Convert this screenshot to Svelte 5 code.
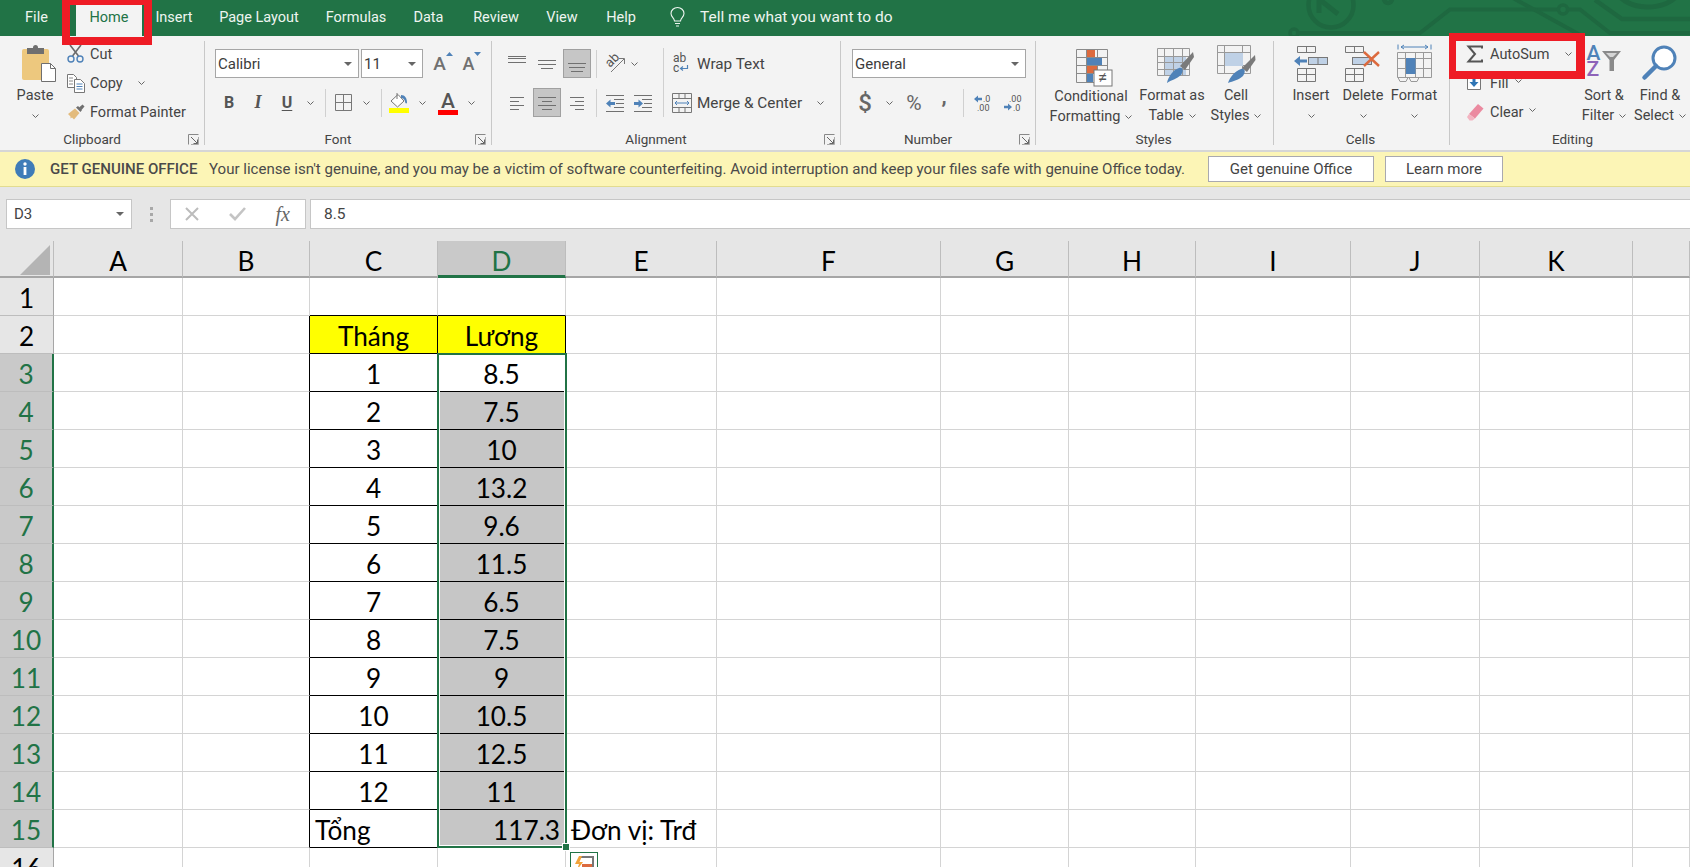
<script>
  const tabs = ['File', 'Home', 'Insert', 'Page Layout', 'Formulas', 'Data', 'Review', 'View', 'Help'];
  const cols = ['A', 'B', 'C', 'D', 'E', 'F', 'G', 'H', 'I', 'J', 'K', ''];
  const rows = Array.from({ length: 16 }, (_, i) => i + 1);
  const content = {
    2: ['Tháng', 'Lương'], 3: ['1', '8.5'], 4: ['2', '7.5'], 5: ['3', '10'], 6: ['4', '13.2'], 7: ['5', '9.6'],
    8: ['6', '11.5'], 9: ['7', '6.5'], 10: ['8', '7.5'], 11: ['9', '9'], 12: ['10', '10.5'], 13: ['11', '12.5'], 14: ['12', '11']
  };
  function cellClass(r, c) {
    const inTable = r >= 2 && r <= 15;
    const out = ['cell'];
    if (inTable && c >= 1 && c <= 3) out.push('black-right');
    if (r >= 1 && r <= 15 && (c === 2 || c === 3)) out.push('black-bottom');
    if (r === 2 && (c === 2 || c === 3)) out.push('yellow');
    if (r >= 4 && r <= 15 && c === 3) out.push('picked');
    if (r === 15 && c === 2) out.push('left');
    if (r === 15 && c === 3) out.push('right');
    if (r === 15 && c === 4) out.push('left', 'spill');
    return out.join(' ');
  }
  function cellText(r, c) {
    if (r === 15) return c === 2 ? 'Tổng' : c === 3 ? '117.3' : c === 4 ? 'Đơn vị: Trđ' : '';
    if (content[r] && (c === 2 || c === 3)) return content[r][c - 2];
    return '';
  }
</script>

{#snippet chev()}
  <svg class="chev" width="7" height="4" viewBox="0 0 7 4"><polyline points="0.5,0.5 3.5,3.5 6.5,0.5" fill="none" stroke="#666" /></svg>
{/snippet}
{#snippet launcher()}
  <span class="launch"><svg width="11" height="11" viewBox="0 0 11 11"><path d="M0.5 10.5V0.5H10.5" fill="none" stroke="#888" /><path d="M3 3L9.5 9.5M9.5 5.5V9.5H5.5" fill="none" stroke="#666" /><path d="M10.5 3V10.5H3" fill="none" stroke="#aaa" /></svg></span>
{/snippet}
{#snippet drop()}
  <svg class="drop" width="8" height="4" viewBox="0 0 8 4"><path d="M0 0H8L4 4Z" fill="#666" /></svg>
{/snippet}
{#snippet lines(list, w)}
  <svg width={w} height="18" viewBox={`0 0 ${w} 18`}>
    {#each list as l}<line x1={l[0]} x2={l[1]} y1={l[2]} y2={l[2]} stroke="#707070" />{/each}
  </svg>
{/snippet}

<div class="page">
  <header class="titlebar">
    <svg class="circuit" width="440" height="36" viewBox="1250 0 440 36">
      <g fill="none" stroke="#1e6840" stroke-width="4.5">
        <circle cx="1331" cy="5" r="22.5" />
        <path d="M1319 -6L1319 13M1319 -1L1338 14" stroke-width="5" />
        <circle cx="1388" cy="-1" r="4" />
        <circle cx="1294" cy="33" r="4" stroke-width="3.5" />
        <path d="M1298 33H1420L1450 9.5H1558" stroke-width="4" />
        <circle cx="1563" cy="9.5" r="4.5" stroke-width="3.5" />
        <path d="M1568 9.5H1580L1610 33H1690" stroke-width="4" />
        <path d="M1513 -2L1582 36" stroke-width="4" />
        <path d="M1595 0L1622 19H1690" stroke-width="4.5" />
        <path d="M1617 -8A32 20 0 0 0 1678 -6" stroke-width="5" />
      </g>
    </svg>
    <nav class="tabs">
      {#each tabs as t}<span class="tab" class:active={t === 'Home'}>{t}</span>{/each}
      <span class="bulb">
        <svg width="15" height="20" viewBox="0 0 15 20"><path d="M4.5 14C4.5 11 1 10 1 6.5A6.5 6 0 0 1 14 6.5C14 10 10.5 11 10.5 14ZM5 16.5H10M6 19H9" fill="none" stroke="#eef5f0" stroke-width="1.1" /></svg>
      </span>
      <span class="tell">Tell me what you want to do</span>
    </nav>
  </header>

  <section class="ribbon">
    <div class="group clipboard">
      <div class="body row">
        <div class="big paste">
          <svg class="ic-paste" width="34" height="37" viewBox="0 0 34 37">
            <rect x="0" y="4" width="27" height="31" rx="2" fill="#edc87e" />
            <rect x="5" y="3" width="17" height="6" fill="#6f6f6f" />
            <circle cx="13.5" cy="2.5" r="2.5" fill="#6f6f6f" />
            <path d="M19.5 18.5H28.5L33.5 23.5V36.5H19.5Z" fill="#fff" stroke="#6f6f6f" />
            <path d="M28.5 18.5V23.5H33.5" fill="none" stroke="#6f6f6f" />
          </svg>
          <span class="t1">Paste</span>
          <span class="t2">{@render chev()}</span>
        </div>
        <div class="smalls">
          <div class="small">
            <span class="sic"><svg width="17" height="18" viewBox="0 0 17 18"><path d="M3 0L11.5 11M14 0L5.5 11" stroke="#6a6a6a" stroke-width="1.6" fill="none" /><circle cx="4" cy="14" r="3" fill="none" stroke="#4f82b8" stroke-width="1.4" /><circle cx="13" cy="14" r="3" fill="none" stroke="#4f82b8" stroke-width="1.4" /></svg></span>
            <span>Cut</span>
          </div>
          <div class="small">
            <span class="sic"><svg width="18" height="19" viewBox="0 0 18 19"><path d="M0.5 0.5H6.5L9.5 3.5V13.5H0.5Z" fill="#fff" stroke="#777" /><path d="M7.5 5.5H13.5L17.5 9.5V18.5H7.5Z" fill="#fff" stroke="#777" /><path d="M2 4H6M2 7H6M2 10H6" stroke="#8a8a8a" /><path d="M9.5 10H15.5M9.5 12.5H15.5M9.5 15H15.5" stroke="#4f82b8" /></svg></span>
            <span>Copy</span>
            <span class="copy-chev">{@render chev()}</span>
          </div>
          <div class="small">
            <span class="sic"><svg width="18" height="16" viewBox="0 0 18 16"><path d="M1 10L8 4.5L12.5 9L7 15.5L5 13.5L3.5 14.5L3.5 12.5Z" fill="#e3bb7c" /><path d="M9 3.5L13.5 8L15 6L11 2Z" fill="#6f6f6f" /><path d="M12 3.5L15.5 0.5L17.5 2.5L14.5 6Z" fill="#6f6f6f" /></svg></span>
            <span>Format Painter</span>
          </div>
        </div>
      </div>
      <div class="label"><span>Clipboard</span>{@render launcher()}</div>
    </div>

    <div class="group font">
      <div class="body">
        <div class="line">
          <div class="combo w144"><span>Calibri</span>{@render drop()}</div>
          <div class="combo w62"><span>11</span>{@render drop()}</div>
          <span class="tool w28 ml6 growA"><b class="a">A</b><svg width="7" height="4" viewBox="0 0 7 4"><path d="M0 4L3.5 0L7 4Z" fill="#4f82b8" /></svg></span>
          <span class="tool w28 ml1 growA"><b class="a small-a">A</b><svg width="7" height="4" viewBox="0 0 7 4"><path d="M0 0H7L3.5 4Z" fill="#4f82b8" /></svg></span>
        </div>
        <div class="line second">
          <span class="tool w28 glyph"><b>B</b></span>
          <span class="tool w30 glyph"><b class="it">I</b></span>
          <span class="tool w28 glyph"><b class="un">U</b></span>
          <span class="tool w18">{@render chev()}</span>
          <i class="sep ml6"></i>
          <span class="tool w22 ml6"><svg width="17" height="17" viewBox="0 0 17 17"><path d="M0.5 0.5H16.5V16.5H0.5ZM8.5 0.5V16.5M0.5 8.5H16.5" fill="none" stroke="#777" /></svg></span>
          <span class="tool w24">{@render chev()}</span>
          <i class="sep ml3"></i>
          <span class="tool w24 ml5"><svg width="20" height="20" viewBox="0 0 20 20"><path d="M9 1.5L2 8L8.5 14L15 8Z" fill="#fff" stroke="#777" /><path d="M8 0V6" stroke="#777" /><path d="M12 2C16 2 18 5 18 10C17 11 16 10 16 8C15 6 14 5 12 5Z" fill="#4f82b8" /><rect x="0" y="15" width="20" height="5" fill="#ffff00" /></svg></span>
          <span class="tool w22">{@render chev()}</span>
          <span class="tool w24 ml3 colorA"><b>A</b><i></i></span>
          <span class="tool w22">{@render chev()}</span>
        </div>
      </div>
      <div class="label"><span>Font</span>{@render launcher()}</div>
    </div>

    <div class="group align">
      <div class="body row">
        <div class="align-left">
          <div class="line">
            <span class="tool w28">{@render lines([[0,18,1.5],[0,18,3.5],[0,18,7.5]], 18)}</span>
            <span class="tool w28 ml2">{@render lines([[0,18,5.5],[0,18,9.5],[3,15,13.5]], 18)}</span>
            <span class="tool w28 ml2 on">{@render lines([[0,18,8.5],[1,17,12.5],[3,15,16.5]], 18)}</span>
            <i class="sep ml5"></i>
            <span class="tool w26 ml5"><svg width="19" height="18" viewBox="0 0 19 18"><text x="0" y="0" transform="translate(4 13) rotate(-45)" class="svgtxt" font-size="13">ab</text><path d="M5 17L18 4M13 3.5H18.5V9" fill="none" stroke="#777" /></svg></span>
            <span class="tool w12">{@render chev()}</span>
          </div>
          <div class="line second">
            <span class="tool w28">{@render lines([[0,14,3.5],[0,9,7.5],[0,14,11.5],[0,9,15.5]], 14)}</span>
            <span class="tool w28 ml2 on">{@render lines([[0,18,3.5],[4,14,7.5],[0,18,11.5],[4,14,15.5]], 18)}</span>
            <span class="tool w28 ml2">{@render lines([[0,14,3.5],[5,14,7.5],[0,14,11.5],[5,14,15.5]], 14)}</span>
            <i class="sep ml5"></i>
            <span class="tool w26 ml5"><svg width="18" height="18" viewBox="0 0 18 18"><path d="M0 1.5H18M8 5.5H18M10 9.5H18M8 13.5H18M0 17.5H18" stroke="#707070" /><path d="M0 9.5L4.5 5.5V8H9V11H4.5V13.5Z" fill="#4f82b8" /></svg></span>
            <span class="tool w30"><svg width="18" height="18" viewBox="0 0 18 18"><path d="M0 1.5H18M8 5.5H18M10 9.5H18M8 13.5H18M0 17.5H18" stroke="#707070" /><path d="M9 9.5L4.5 5.5V8H0V11H4.5V13.5Z" fill="#4f82b8" /></svg></span>
          </div>
        </div>
        <i class="sep tall"></i>
        <div class="align-right">
          <div class="line textline">
            <span class="sic2"><svg width="17" height="19" viewBox="0 0 17 19"><text x="1" y="8" class="svgtxt" font-size="12">ab</text><text x="1" y="18" class="svgtxt" font-size="12">c</text><path d="M15.5 11V14.5H9M11 12.5L8.5 14.5L11 16.5" fill="none" stroke="#4f82b8" stroke-width="1.2" /></svg></span>
            <span>Wrap Text</span>
          </div>
          <div class="line second textline">
            <span class="sic2"><svg width="20" height="20" viewBox="0 0 20 20"><path d="M0.5 0.5H19.5V19.5H0.5ZM0.5 5.5H19.5M0.5 14.5H19.5M7 0.5V5.5M13 0.5V5.5M7 14.5V19.5M13 14.5V19.5" fill="none" stroke="#777" /><path d="M3 10H17M5 8L3 10L5 12M15 8L17 10L15 12" fill="none" stroke="#4f82b8" /></svg></span>
            <span>Merge &amp; Center</span>
            <span class="merge-chev">{@render chev()}</span>
          </div>
        </div>
      </div>
      <div class="label"><span>Alignment</span>{@render launcher()}</div>
    </div>

    <div class="group number">
      <div class="body">
        <div class="line"><div class="combo w174"><span>General</span>{@render drop()}</div></div>
        <div class="line second">
          <span class="tool w26 glyph big-g dollar"><b>$</b></span>
          <span class="tool w22">{@render chev()}</span>
          <span class="tool w28 glyph pct">%</span>
          <span class="tool w28 ml2 glyph big-g comma"><b>,</b></span>
          <i class="sep ml5"></i>
          <span class="tool w32 ml2"><svg width="17" height="18" viewBox="0 0 17 18"><path d="M0 5L4 1.5V3.8H8V6.2H4V8.5Z" fill="#4f82b8" /><text x="9" y="8" class="svgtxt" font-size="9">.0</text><text x="3" y="17" class="svgtxt" font-size="9">.00</text></svg></span>
          <span class="tool w28"><svg width="17" height="18" viewBox="0 0 17 18"><text x="5" y="8" class="svgtxt" font-size="9">.00</text><path d="M8 14L4 10.5V12.8H0V15.2H4V17.5Z" transform="translate(0 -1)" fill="#4f82b8" /><text x="9" y="17" class="svgtxt" font-size="9">.0</text></svg></span>
        </div>
      </div>
      <div class="label"><span>Number</span>{@render launcher()}</div>
    </div>

    <div class="group styles">
      <div class="body row">
        <div class="big w90">
          <svg class="ic cf" width="37" height="38" viewBox="0 0 37 38">
            <path d="M0.5 0.5H31.5V33.5H0.5ZM0.5 8.5H31.5M0.5 16.5H31.5M0.5 24.5H31.5M10.5 0.5V33.5M21.5 0.5V33.5" fill="none" stroke="#8a8a8a" />
            <rect x="11" y="1" width="8" height="7" fill="#dc6a3e" /><rect x="11" y="9" width="15" height="7" fill="#4f82b8" /><rect x="11" y="17" width="10" height="7" fill="#dc6a3e" /><rect x="11" y="25" width="6" height="8" fill="#4f82b8" />
            <rect x="18" y="21" width="18" height="16" fill="#fff" stroke="#777" />
            <text x="22" y="34" class="svgtxt" font-size="17">≠</text>
          </svg>
          <span class="t1">Conditional</span>
          <span class="t2">Formatting {@render chev()}</span>
        </div>
        <div class="big w72">
          <svg class="ic tb" width="37" height="36" viewBox="0 0 37 36">
            <rect x="7" y="8" width="22" height="20" fill="#bfd1e6" />
            <path d="M0.5 0.5H32.5V27.5H0.5ZM0.5 8.5H32.5M0.5 14.5H32.5M0.5 21.5H32.5M7.5 0.5V27.5M16.5 0.5V27.5M25.5 0.5V27.5" fill="none" stroke="#999" />
            <path d="M36 4L37 9L28 22L23 18Z" fill="#7a7a7a" />
            <path d="M22 20C26 19 27 23 24 27C20 31 14 32 10 35C11 29 16 22 22 20Z" fill="#4f82b8" />
          </svg>
          <span class="t1">Format as</span>
          <span class="t2">Table {@render chev()}</span>
        </div>
        <div class="big w56">
          <svg class="ic shift" width="39" height="38" viewBox="0 0 39 38">
            <path d="M0.5 0.5H33.5V28.5H0.5ZM0.5 7.5H33.5M0.5 20.5H33.5M7.5 0.5V28.5M25.5 0.5V28.5" fill="none" stroke="#999" />
            <rect x="8" y="8" width="18" height="13" fill="#bfd1e6" />
            <path d="M38 10L38.5 15L30 27L25 23Z" fill="#7a7a7a" />
            <path d="M24 24C28 23 29 27 26 31C22 35 16 36 11 38C13 32 18 26 24 24Z" fill="#4f82b8" />
          </svg>
          <span class="t1">Cell</span>
          <span class="t2">Styles {@render chev()}</span>
        </div>
      </div>
      <div class="label centered"><span>Styles</span></div>
    </div>

    <div class="group cells">
      <div class="body row">
        <div class="big w50">
          <svg class="ic five" width="34" height="36" viewBox="0 0 34 36">
            <path d="M3.5 0.5H21.5V6.5H3.5ZM12.5 0.5V6.5M3.5 22.5H21.5V35.5H3.5ZM12.5 22.5V35.5M3.5 28.5H21.5" fill="none" stroke="#777" />
            <rect x="14.5" y="11.5" width="19" height="7" fill="#bfd1e6" stroke="#777" /><path d="M24 11.5V18.5" stroke="#777" />
            <path d="M0 15L6 10V13.5H13V16.5H6V20Z" fill="#4f82b8" />
          </svg>
          <span class="t1">Insert</span>
          <span class="t2">{@render chev()}</span>
        </div>
        <div class="big w54">
          <svg class="ic five" width="36" height="36" viewBox="0 0 36 36">
            <path d="M0.5 0.5H18.5V6.5H0.5ZM9.5 0.5V6.5M0.5 22.5H18.5V35.5H0.5ZM9.5 22.5V35.5M0.5 28.5H18.5" fill="none" stroke="#777" />
            <rect x="7.5" y="11.5" width="19" height="7" fill="#bfd1e6" stroke="#777" />
            <path d="M19 6L34 20M34 6L19 20" stroke="#dc6a3e" stroke-width="2.4" />
          </svg>
          <span class="t1">Delete</span>
          <span class="t2">{@render chev()}</span>
        </div>
        <div class="big w48">
          <svg class="ic up" width="35" height="38" viewBox="0 0 35 38">
            <path d="M1 0.5V5.5M34 0.5V5.5M4 3H31M7 1L4 3L7 5M28 1L31 3L28 5" fill="none" stroke="#4f82b8" />
            <path d="M0.5 8.5H34.5V33.5H0.5ZM0.5 14.5H34.5M0.5 24.5H34.5M8.5 8.5V33.5M18.5 8.5V33.5M26.5 8.5V33.5" fill="none" stroke="#999" />
            <rect x="9" y="14" width="9.5" height="16" fill="#4f82b8" />
            <path d="M1 33.5L3 37.5H9L11 33.5M12 33.5L14 37.5H20L22 33.5" fill="none" stroke="#999" />
          </svg>
          <span class="t1">Format</span>
          <span class="t2">{@render chev()}</span>
        </div>
      </div>
      <div class="label centered"><span>Cells</span></div>
    </div>

    <div class="group editing">
      <div class="body row">
        <div class="smalls editing-col">
          <div class="small">
            <span class="sic"><svg width="16" height="18" viewBox="0 0 16 18"><path d="M15 3.5V1.5H1.5L8 9L1.5 16.5H15V14.5" fill="none" stroke="#555" stroke-width="2" /></svg></span>
            <span>AutoSum</span>
            <span class="auto-chev">{@render chev()}</span>
          </div>
          <div class="small">
            <span class="sic"><svg width="14" height="13" viewBox="0 0 14 13"><path d="M0.5 0V12.5H13.5V0" fill="#fff" stroke="#777" /><path d="M5.5 0H8.5V5H11.5L7 10L2.5 5H5.5Z" fill="#2f75b5" /></svg></span>
            <span>Fill</span>
            <span class="fill-chev">{@render chev()}</span>
          </div>
          <div class="small">
            <span class="sic"><svg width="17" height="18" viewBox="0 0 17 18"><path d="M11 1L16.5 5.5L8 15.5L2 11Z" fill="#eb8aa0" /><path d="M2 11L8 15.5L5.5 17.5H2.5L0 14Z" fill="#f3b4c1" /></svg></span>
            <span>Clear</span>
            <span class="fill-chev">{@render chev()}</span>
          </div>
        </div>
        <div class="big w42">
          <span class="azf">
            <span class="az"><b class="blue">A</b><b class="purple">Z</b></span>
            <svg width="19" height="20" viewBox="0 0 19 20"><path d="M0 0H19L12 9V20H7.5V9Z" fill="#8a8a8a" /><path d="M4 2H15L11 6H8Z" fill="#d5d5d5" /></svg>
          </span>
          <span class="t1">Sort &amp;</span>
          <span class="t2">Filter {@render chev()}</span>
        </div>
        <div class="big w52 ml9">
          <svg class="ic" width="36" height="35" viewBox="0 0 36 35">
            <circle cx="22" cy="13" r="11" fill="#fff" stroke="#4f82b8" stroke-width="3" />
            <path d="M14 21L2.5 32.5" stroke="#4f82b8" stroke-width="4.5" stroke-linecap="round" />
          </svg>
          <span class="t1">Find &amp;</span>
          <span class="t2">Select {@render chev()}</span>
        </div>
      </div>
      <div class="label centered"><span>Editing</span></div>
    </div>
  </section>

  <section class="banner">
    <svg width="20" height="20" viewBox="0 0 20 20"><circle cx="10" cy="10" r="10" fill="#3f7cb8" /><rect x="8.6" y="8" width="2.8" height="8" fill="#fff" /><circle cx="10" cy="5" r="1.7" fill="#fff" /></svg>
    <strong>GET GENUINE OFFICE</strong>
    <span class="msg">Your license isn't genuine, and you may be a victim of software counterfeiting. Avoid interruption and keep your files safe with genuine Office today.</span>
    <button class="get">Get genuine Office</button>
    <button class="learn">Learn more</button>
  </section>

  <section class="formula">
    <div class="namebox"><span>D3</span>{@render drop()}</div>
    <div class="grip"><i></i><i></i><i></i></div>
    <div class="fx">
      <svg width="14" height="14" viewBox="0 0 14 14"><path d="M1 1L13 13M13 1L1 13" stroke="#bcbcbc" stroke-width="2" /></svg>
      <svg width="17" height="14" viewBox="0 0 17 14"><path d="M1 7L6 12L16 1" fill="none" stroke="#c4c4c4" stroke-width="2.6" /></svg>
      <span class="fxt">fx</span>
    </div>
    <div class="input">8.5</div>
  </section>

  <section class="sheet">
    <div class="corner"><svg width="30" height="30" viewBox="0 0 30 30"><path d="M30 0V30H0Z" fill="#b4b4b4" /></svg></div>
    {#each cols as c}
      <div class="colhead" class:sel={c === 'D'}>{c}</div>
    {/each}
    {#each rows as r}
      <div class="rowhead" class:sel={r >= 3 && r <= 15} style={`grid-row:${r + 1};grid-column:1`}>{r}</div>
      {#each cols as _, c}
        <div class={cellClass(r, c)} style={`grid-row:${r + 1};grid-column:${c + 2}`}>{cellText(r, c)}</div>
      {/each}
    {/each}
    <div class="selection"><i class="handle"></i></div>
    <div class="quick">
      <svg width="20" height="20" viewBox="0 0 20 20"><path d="M7 1H19V19H7" fill="none" stroke="#777" stroke-width="2" /><path d="M5 0L1 8H5L3 14L9 6H5.5L8 0Z" fill="#f2a33a" /><rect x="8" y="8" width="10" height="3.5" fill="#dc6a3e" /><rect x="8" y="12" width="10" height="3.5" fill="#3f7cb8" /></svg>
    </div>
  </section>

  <div class="mark mark-home"></div>
  <div class="mark mark-sum"></div>
</div>

<style>
  :global(body) { margin: 0; background: #fff; }
  * { box-sizing: border-box; }
  svg { overflow: visible; }
  .page { position: relative; width: 1690px; height: 867px; overflow: hidden; font-family: Roboto, "Open Sans", sans-serif; color: #444; font-size: 14.5px; }
  i { display: block; font-style: normal; }

  .titlebar { position: relative; height: 36px; background: #217346; color: #eef5f0; overflow: hidden; }
  .circuit { position: absolute; right: 0; top: 0; overflow: hidden; }
  .tabs { display: grid; grid-template-columns: 73px 70px 62px 108px 86px 59px 76px 56px 62px 48px auto; justify-content: start; height: 36px; align-items: stretch; }
  .tab, .bulb { display: flex; align-items: center; justify-content: center; padding-bottom: 2px; }
  .bulb { padding-left: 3px; }
  .tab.active { background: #f3f3f3; color: #217346; margin: 0 1px 0 3px; }
  .tell { display: flex; align-items: center; padding-bottom: 2px; font-size: 15.5px; }

  .ribbon { display: flex; height: 116px; background: #f3f3f3; border-bottom: 2px solid #d6d6d6; padding-top: 5px; }
  .group { height: 104px; display: flex; flex-direction: column; border-right: 1px solid #c8c8c8; flex: none; }
  .clipboard { width: 205px; }
  .font { width: 287px; }
  .align { width: 349px; }
  .number { width: 195px; }
  .styles { width: 238px; }
  .cells { width: 176px; }
  .editing { width: 240px; border-right: 0; }
  .body { height: 89px; flex: none; }
  .row { display: flex; }
  .label { display: flex; height: 18px; margin-bottom: -3px; align-items: center; }
  .label > span:first-child { flex: 1; text-align: center; font-size: 13.5px; }
  .launch { width: 20px; display: flex; justify-content: center; padding-right: 1px; }
  .label.centered { padding-right: 2px; }
  .editing .label { padding-left: 7px; }

  .big { display: flex; flex-direction: column; align-items: center; flex: none; white-space: nowrap; height: 85px; }
  .big > svg, .azf { margin-top: 4px; margin-bottom: auto; }
  .big > svg.ic-paste { margin-left: 8px; }
  .big > svg.cf { margin-top: 8px; margin-left: 6px; }
  .big > svg.tb { margin-top: 7px; margin-left: 6px; }
  .big > svg.shift { margin-top: 4px; }
  .big > svg.five { margin-top: 5px; }
  .big > svg.up { margin-top: 3px; }
  .t1, .t2 { height: 20px; line-height: 20px; display: flex; align-items: center; gap: 5px; flex: none; }
  .t1 { margin-top: auto; }
  .paste { width: 64px; margin-left: 3px; }
  .smalls { display: flex; flex-direction: column; gap: 5px; padding-top: 1px; }
  .small { display: flex; align-items: center; height: 24px; white-space: nowrap; }
  .sic { width: 23px; flex: none; display: flex; align-items: center; }
  .copy-chev { margin-left: 15px; display: flex; }
  .auto-chev { margin-left: 15px; display: flex; }
  .fill-chev { margin-left: 6px; display: flex; margin-top: -4px; }
  .editing-col { width: 116px; margin-left: 17px; flex: none; }
  .azf { display: flex; gap: 2px; align-items: center; }
  .az { display: flex; flex-direction: column; line-height: 16px; font-size: 21px; }
  .blue { color: #4f82b8; font-weight: 500; }
  .purple { color: #8e63b8; font-weight: 500; }
  .w90 { width: 90px; margin-left: 10px; }
  .w72 { width: 72px; }
  .w56 { width: 56px; }
  .w50 { width: 50px; margin-left: 12px; }
  .w54 { width: 54px; }
  .w48 { width: 48px; }
  .w42 { width: 42px; }
  .w52 { width: 52px; }
  .ml9 { margin-left: 9px; }

  .font .body, .number .body { padding-left: 10px; }
  .number .body { padding-left: 11px; }
  .line { display: flex; align-items: center; height: 29px; margin-top: 8px; white-space: nowrap; }
  .line.second { margin-top: 10px; }
  .combo { height: 29px; flex: none; background: #fff; border: 1px solid #a6a6a6; display: flex; align-items: center; justify-content: space-between; padding: 0 6px 0 2px; font-size: 15px; color: #3c3c3c; }
  .w144 { width: 144px; margin-right: 2px; }
  .w62 { width: 62px; }
  .w174 { width: 174px; }
  .tool { flex: none; height: 29px; display: flex; align-items: center; justify-content: center; }
  .w12 { width: 12px; }
  .w18 { width: 18px; }
  .w22 { width: 22px; }
  .w24 { width: 24px; }
  .w26 { width: 26px; }
  .w28 { width: 28px; }
  .w30 { width: 30px; }
  .w32 { width: 32px; }
  .ml1 { margin-left: 1px; }
  .ml2 { margin-left: 2px; }
  .ml3 { margin-left: 3px; }
  .ml5 { margin-left: 5px; }
  .ml6 { margin-left: 6px; }
  .sep { width: 1px; height: 28px; background: #d0d0d0; flex: none; }
  .sep.tall { height: 69px; margin-top: 7px; }
  .on { background: #c6c6c6; border: 1px solid #a0a0a0; }
  .glyph { font-size: 16px; color: #555; }
  .glyph b { font-weight: 700; }
  .it { font-style: italic; font-family: "Liberation Serif", serif; font-size: 18px; }
  .un { text-decoration: underline; text-underline-offset: 2px; }
  .big-g { font-size: 21px; color: #666; }
  .dollar { font-size: 24px; }
  .dollar b { font-weight: 500; }
  .comma { padding-bottom: 14px; }
  .pct { font-size: 21px; color: #666; }
  .growA { gap: 0; align-items: flex-start; padding-top: 3px; color: #707070; }
  .a { font-size: 19px; font-weight: 500; line-height: 23px; }
  .small-a { font-size: 18px; }
  .colorA { flex-direction: column; color: #555; }
  .colorA b { font-size: 21px; font-weight: 500; line-height: 17px; margin-top: 3px; }
  .colorA i { width: 20px; height: 5px; background: #ff0000; }
  .svgtxt { font-family: Roboto, sans-serif; fill: #555; }
  .align-left { width: 171px; padding-left: 11px; flex: none; }
  .align-right { flex: 1; font-size: 15.3px; }
  .textline { padding-left: 8px; }
  .sic2 { width: 25px; flex: none; display: flex; align-items: center; }
  .merge-chev { margin-left: 15px; display: flex; }

  .banner { display: flex; align-items: center; height: 35px; background: #fcf5b6; border-bottom: 1px solid #e2dc90; padding-left: 15px; color: #4a4a4a; font-size: 15.05px; white-space: nowrap; }
  .banner strong { font-weight: 500; margin-left: 15px; width: 159px; flex: none; }
  .msg { width: 999px; flex: none; }
  .banner button { height: 26px; background: #fff; border: 1px solid #a9a9b0; font: inherit; color: #444; padding: 0; }
  .get { width: 166px; margin-right: 11px; }
  .learn { width: 118px; }

  .formula { display: flex; height: 54px; background: #e6e6e6; padding-top: 12px; }
  .namebox { width: 126px; height: 30px; margin-left: 6px; background: #fff; border: 1px solid #c6c6c6; display: flex; align-items: center; justify-content: space-between; padding: 0 7px; font-size: 15px; }
  .grip { width: 38px; height: 30px; display: flex; flex-direction: column; align-items: center; justify-content: center; gap: 3px; }
  .grip i { width: 3px; height: 3px; background: #a8a8a8; }
  .fx { width: 136px; height: 30px; background: #fff; border: 1px solid #c6c6c6; display: flex; align-items: center; justify-content: space-between; padding: 0 15px 0 14px; }
  .fxt { font-family: "Liberation Serif", serif; font-style: italic; font-size: 20px; color: #666; }
  .input { flex: 1; height: 30px; margin-left: 4px; background: #fff; border: 1px solid #c6c6c6; border-right: 0; display: flex; align-items: center; padding-left: 13px; font-size: 15.5px; }

  .sheet { display: grid; grid-template-columns: 54px 129px 127px 128px 128px 151px 224px 128px 127px 155px 129px 153px 57px; grid-template-rows: 37px repeat(16, 38px); font-family: Lato, sans-serif; font-size: 26.2px; color: #000; background: #fff; }
  .corner { background: #e6e6e6; border-bottom: 2px solid #a6a6a6; border-right: 1px solid #bdbdbd; display: flex; align-items: flex-end; justify-content: flex-end; padding: 0 3px 1px 0; }
  .colhead { background: #e6e6e6; border-right: 1px solid #bdbdbd; border-bottom: 2px solid #a6a6a6; display: flex; align-items: center; justify-content: center; padding-top: 5px; }
  .colhead:last-of-type { border-right: 0; }
  .colhead.sel { background: #c9c9c9; color: #217346; border-bottom: 3px solid #217346; }
  .rowhead { background: #e6e6e6; border-right: 1px solid #a6a6a6; border-bottom: 1px solid #bdbdbd; display: flex; align-items: center; justify-content: center; padding-top: 3px; }
  .rowhead.sel { background: #c9c9c9; color: #217346; border-right: 2px solid #217346; }
  .cell { border-right: 1px solid #d4d4d4; border-bottom: 1px solid #d4d4d4; display: flex; align-items: center; justify-content: center; padding-top: 2px; white-space: nowrap; }
  .cell.black-right { border-right-color: #000; }
  .cell.black-bottom { border-bottom-color: #000; }
  .cell.yellow { background: #ffff00; }
  .cell.picked { background: #c6c6c6; }
  .cell.left { justify-content: flex-start; padding-left: 5px; }
  .cell.right { justify-content: flex-end; padding-right: 5px; }
  .selection { grid-column: 5; grid-row: 4 / 17; margin: -1px -1px 0 -1px; border: 2px solid #217346; box-shadow: inset 0 0 0 1px #fff; position: relative; z-index: 2; }
  .handle { position: absolute; right: -5px; bottom: -5px; width: 8px; height: 8px; background: #217346; border: 1px solid #fff; }
  .quick { grid-column: 6; grid-row: 17; margin: 4px 0 0 4px; width: 28px; height: 28px; border: 1px solid #217346; background: #fff; display: flex; align-items: center; justify-content: center; z-index: 2; }

  .mark { position: absolute; border-style: solid; border-color: #ee1c25; z-index: 5; }
  .mark-home { left: 62px; top: 0; width: 90px; height: 45px; border-width: 5px 8px 8px; }
  .mark-sum { left: 1449px; top: 33px; width: 136px; height: 46px; border-width: 8px 9px 8px 7px; }
</style>
